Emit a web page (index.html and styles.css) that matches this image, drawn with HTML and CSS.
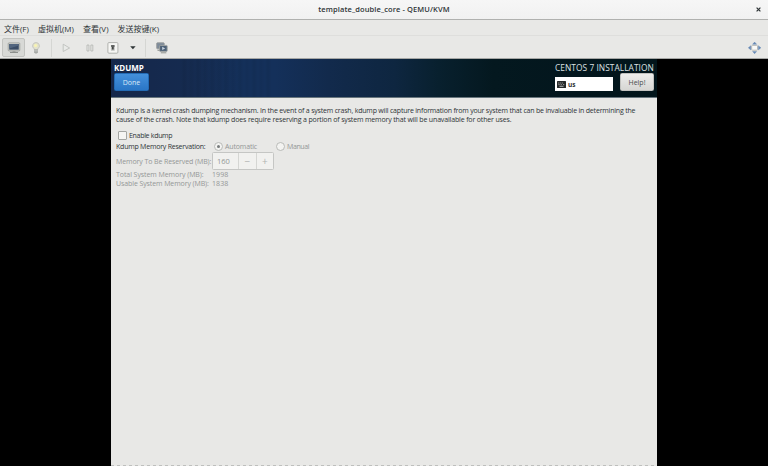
FILE: index.html
```html
<!DOCTYPE html>
<html lang="zh-CN">
<head>
<meta charset="utf-8">
<title>template_double_core - QEMU/KVM</title>
<link rel="stylesheet" href="styles.css">
</head>
<body>
<header class="titlebar">
  <span class="window-title">template_double_core - QEMU/KVM</span>
  <svg class="close" width="5" height="5" viewBox="0 0 5 5"><path d="M.6.6l3.8 3.8M4.4.6L.6 4.4" stroke="#2e3436" stroke-width="1.2"/></svg>
</header>
<nav class="menubar">
  <span class="m-file">文件(F)</span><span class="m-vm">虚拟机(M)</span><span class="m-view">查看(V)</span><span class="m-key">发送按键(K)</span>
</nav>
<div class="toolbar">
  <div class="tool active">
    <svg width="14" height="12" viewBox="0 0 14 12"><rect x="1.2" y=".9" width="11.6" height="8" rx=".8" fill="#d4d6d1" stroke="#8c8f8b" stroke-width=".7"/><path d="M2.2 2h9.6v5.7H2.2z" fill="#3b4d66"/><path d="M2.2 2h9.6v1.5L2.2 6.5z" fill="#53667f"/><path d="M5.5 9h3v1.2h-3z" fill="#a5a7a3"/><path d="M3 10.4h8" stroke="#858884"/></svg>
  </div>
  <svg class="bulb" width="10" height="12" viewBox="0 0 10 12"><path d="M5 .6a3.3 3.3 0 0 0-2 6l.5 1.2h3L7 6.600A3.300 3.300 0 0 0 5 .6z" fill="#e3e2cd" stroke="#b8b9b3" stroke-width=".7"/><circle cx="4.600" cy="3.600" r="1.500" fill="#f8f4b0"/><path d="M3 7.500h4v3.100l-1.200.9H4.200L3 10.600z" fill="#a5a8a5"/><path d="M3 8.900h4" stroke="#dfe0dd" stroke-width=".6"/></svg>
  <i class="separator"></i>
  <svg class="play" width="9" height="10" viewBox="0 0 9 10"><path d="M1.200 1.200v7.300L7.600 5z" fill="#e9eae8" stroke="#b9bbb8" stroke-width=".8"/></svg>
  <svg class="pause" width="8" height="8" viewBox="0 0 8 8"><path d="M1 1h1.900v6H1zM4.900 1h1.900v6H4.900z" fill="#ededeb" stroke="#b0b2af" stroke-width=".8"/></svg>
  <svg class="power" width="12" height="12" viewBox="0 0 12 12"><rect x=".9" y=".6" width="10" height="10.600" rx="1" fill="#f6f6f4" stroke="#a0a29e" stroke-width=".8"/><rect x="3.900" y="3" width="3.800" height="5.800" rx=".5" fill="#bfc1be"/><path d="M4.100 3.200h3.400v1.600H4.100z" fill="#4b4d4c"/><path d="M4.900 4.800h1.800v2.700H4.900z" fill="#444645"/></svg>
  <svg class="caret" width="6" height="4" viewBox="0 0 6 4"><path d="M.2.300h5.400L2.900 3.300z" fill="#2e3436"/></svg>
  <i class="separator second"></i>
  <svg class="snapshots" width="12" height="12" viewBox="0 0 12 12"><rect x=".7" y=".8" width="7.500" height="6" rx=".7" fill="#7c8a99" stroke="#989c9c" stroke-width=".9"/><path d="M1.500 8.300h3" stroke="#8b8e8b"/><rect x="3.600" y="3.400" width="7.600" height="6" rx=".7" fill="#4d6178" stroke="#a3a6a4" stroke-width=".9"/><path d="M6.200 4.700v3.400l3-1.700z" fill="#c8d3df"/><path d="M4.800 10.800h5.500" stroke="#858884" stroke-width=".9"/></svg>
  <svg class="fullscreen" width="13" height="12" viewBox="0 0 13 12"><rect x="3.700" y="3.400" width="5.800" height="4.800" rx=".8" fill="#fafaf8" stroke="#b3b5b1" stroke-width=".9"/><path d="M6.600.1l2 2.200h-4zM6.600 11.700l2-2.200h-4zM.300 5.800L2.800 3.700v4.200zM12.900 5.800l-2.500-2.100v4.200z" fill="#6689b5" stroke="#6689b5" stroke-width=".4"/></svg>
</div>
<main class="screen">
  <section class="guest">
    <div class="banner">
      <div class="left">
        <h1>KDUMP</h1>
        <button class="done">Done</button>
      </div>
      <div class="right">
        <h2>CENTOS 7 INSTALLATION</h2>
        <div class="row">
          <div class="layout"><svg width="9" height="7" viewBox="0 0 9 7"><rect width="9" height="7" rx=".5" fill="#262929"/><path d="M1.300 2h1M3.300 2h1M5.300 2h.8M1.500 3.600h1M3.700 3.600h1M6.200 3.600h1M2.500 5.300h4" stroke="#d3d5d5" stroke-width=".8"/></svg><b>us</b></div>
          <button class="help">Help!</button>
        </div>
      </div>
    </div>
    <div class="content">
      <p><span class="line1">Kdump is a kernel crash dumping mechanism. In the event of a system crash, kdump will capture information from your system that can be invaluable in determining the</span><br><span class="line2">cause of the crash. Note that kdump does require reserving a portion of system memory that will be unavailable for other uses.</span></p>
      <label class="enable"><i class="check"></i><span>Enable kdump</span></label>
      <div class="field reservation"><span class="name"><span class="t1">Kdump Memory Reservation:</span></span><i class="radio on"></i><span class="auto">Automatic</span><i class="radio"></i><span class="manual">Manual</span></div>
      <div class="field reserve dim"><span class="name"><span class="t2">Memory To Be Reserved (MB):</span></span><div class="spin"><span class="value">160</span><span class="step">−</span><span class="step">+</span></div></div>
      <div class="field total dim"><span class="name"><span class="t3">Total System Memory (MB):</span></span><span class="num">1998</span></div>
      <div class="field usable dim"><span class="name"><span class="t4">Usable System Memory (MB):</span></span><span class="num">1838</span></div>
    </div>
    <div class="edge"></div>
  </section>
</main>
</body>
</html>
```
FILE: styles.css
```css
* { box-sizing: border-box; }
body { margin: 0; width: 768px; height: 466px; overflow: hidden; background: #e8e8e6; color: #2e3436; font: 7px/9px "Open Sans", "Noto Sans", "Noto Sans CJK SC", sans-serif; }
svg { display: block; flex: none; }
.titlebar { height: 20px; display: flex; align-items: center; justify-content: center; background: linear-gradient(#f6f6f6, #f1f1f1); border-bottom: 1px solid #b0b1af; position: relative; }
.window-title { font-size: 7.5px; font-weight: 600; letter-spacing: .1px; white-space: nowrap; }
.close { position: absolute; right: 7px; top: 7px; }
.menubar { height: 16px; display: flex; align-items: center; padding: 1px 0 0 4px; border-bottom: 1px solid #dededc; font-family: "Open Sans", "Noto Sans CJK SC", sans-serif; font-size: 8px; white-space: nowrap; }
.menubar span { flex: none; }
.m-file { width: 34px; }
.m-vm { width: 45px; }
.m-view { width: 34.5px; }
.toolbar { height: 23px; display: flex; align-items: center; padding: 1px 0 0 2px; border-bottom: 1px solid #a6a7a5; }
.tool { width: 23px; height: 19px; border: 1px solid #c2c3c0; border-radius: 2px; background: #d8d9d6; display: flex; align-items: center; justify-content: center; }
.bulb { margin-left: 6px; }
.separator { width: 1px; height: 18px; background: #d5d6d3; margin-left: 10px; }
.play { margin-left: 10px; }
.pause { margin-left: 15px; }
.power { margin-left: 13px; }
.caret { margin-left: 11px; }
.separator.second { margin-left: 9px; }
.snapshots { margin-left: 10px; }
.fullscreen { margin-left: auto; margin-right: 7px; }
.screen { height: 407px; background: #000; padding: 0 111px; }
.guest { height: 407px; background: #e8e8e6; display: flex; flex-direction: column; }
.banner { height: 39px; flex: none; padding: 4px 3px 0; display: flex; justify-content: space-between; border-bottom: 1px solid #68767d; background: repeating-linear-gradient(90deg, transparent 0, rgba(0,0,0,.06) 3px, transparent 7px, rgba(0,0,0,.04) 10px, transparent 14px) 70px 0 / 90px 100% no-repeat, linear-gradient(90deg, #15274a 0, #152b50 15%, #14305a 24%, #14305a 30%, #122a4c 40%, #0e2640 52%, #08202e 60%, #04181f 70%, #02151b 100%); }
h1, h2 { margin: 0; font-size: 8px; line-height: 9px; white-space: nowrap; color: #fff; }
h2 { font-weight: 400; font-size: 8.4px; letter-spacing: .04px; color: #dce1e2; }
button { font: inherit; font-size: 7px; border-radius: 1.5px; padding: 0; display: block; }
.done { width: 35px; height: 18px; margin-top: 1px; color: #d9e8f7; border: 1px solid #236bb5; background: linear-gradient(#4490db, #2a76c6); }
.right { width: 99px; }
.row { display: flex; justify-content: space-between; margin-top: 1px; }
.layout { width: 58px; height: 14px; margin-top: 4px; padding-left: 2px; display: flex; align-items: center; gap: 2px; background: #fff; font-size: 6.5px; }
.help { width: 34px; height: 18px; color: #4a4e4f; border: 1px solid #c2c2bf; background: linear-gradient(#ededeb, #d6d6d3); }
.content { flex: 1; padding: 8px 0 0 5px; white-space: nowrap; }
p { margin: 0; height: 19px; }
.line1 { letter-spacing: -.195px; }
.line2 { letter-spacing: -.15px; }
.enable { display: flex; align-items: center; height: 10px; margin-top: 5px; padding-left: 2px; letter-spacing: -.3px; }
.check { width: 9px; height: 9px; border: 1px solid #a4a6a3; border-radius: 1px; background: #f5f5f3; margin-right: 2px; }
.field { display: flex; align-items: center; height: 9px; }
.name { width: 96px; flex: none; }
.t1 { letter-spacing: -.22px; }
.t2 { letter-spacing: -.1px; }
.t3 { letter-spacing: -.07px; }
.t4 { letter-spacing: -.1px; }
.num { letter-spacing: .1px; }
.reservation { height: 11px; margin-top: 1px; }
.radio { width: 9px; height: 9px; border: 1px solid #b9bbb8; border-radius: 50%; background: #f3f3f1; margin: 0 2px; display: flex; align-items: center; justify-content: center; }
.radio.on::after { content: ""; width: 3px; height: 3px; border-radius: 50%; background: #777b7b; }
.auto, .manual, .dim { color: #949796; }
.auto { width: 49px; letter-spacing: -.15px; }
.manual { letter-spacing: -.4px; }
.reserve { height: 18px; }
.spin { display: flex; width: 62px; height: 18px; border: 1px solid #c5c6c4; border-radius: 1.5px; background: #f1f1ef; line-height: 16px; }
.value { width: 26px; padding-left: 4px; font-size: 7.5px; }
.step { width: 18px; border-left: 1px solid #d5d6d3; text-align: center; font-size: 10px; color: #b1b3b2; }
.edge { height: 1px; flex: none; background: repeating-linear-gradient(90deg, #bebfbd 0 3px, #e8e8e6 3px 6px); }
```
